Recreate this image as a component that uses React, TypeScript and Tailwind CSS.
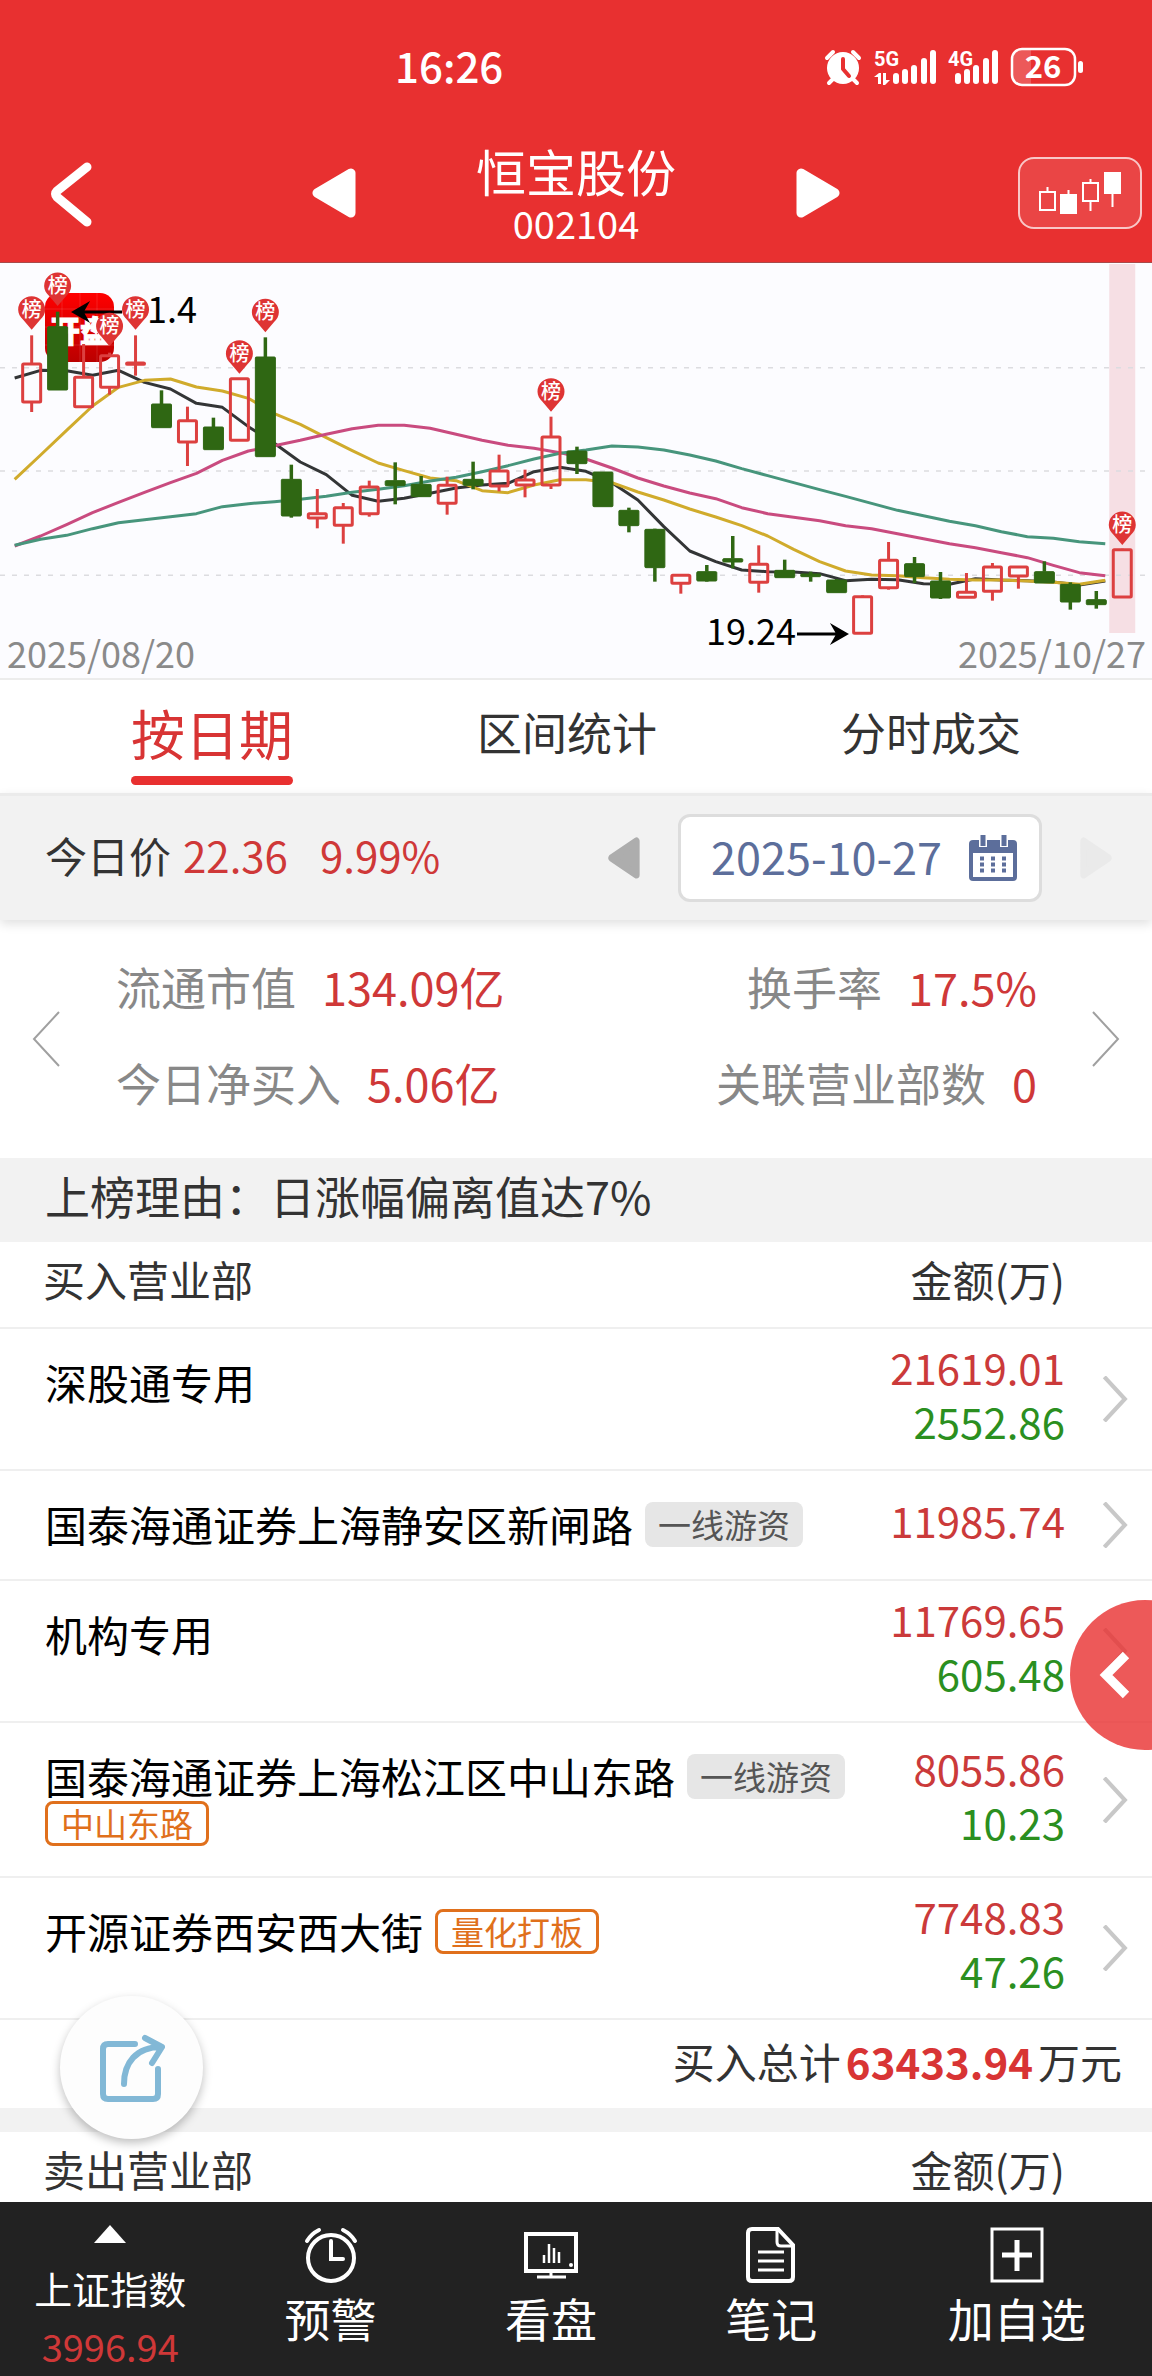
import { useState } from 'react';

type Candle = { up: boolean; high: number; top: number; bottom: number; low: number };

// [up, high, body top, body bottom, low] in thirds of a pixel from the top of the plot
const rawCandles: [number, number, number, number, number][] = [
  [1, 226, 312, 426, 456], [0, 155, 200, 390, 390], [1, 252, 352, 440, 440], [1, 278, 287, 382, 404],
  [1, 226, 309, 313, 347], [0, 391, 432, 503, 503], [1, 440, 482, 546, 618], [0, 473, 501, 569, 569],
  [1, 356, 356, 541, 541], [0, 232, 291, 590, 590], [0, 614, 658, 768, 773], [1, 687, 761, 774, 805],
  [1, 729, 743, 796, 851], [1, 662, 681, 761, 770], [0, 607, 662, 677, 733], [0, 648, 673, 710, 710],
  [1, 650, 676, 730, 764], [0, 605, 658, 676, 688], [1, 584, 633, 678, 694], [1, 629, 660, 675, 712],
  [1, 470, 531, 675, 687], [0, 560, 573, 611, 642], [0, 636, 636, 740, 740], [0, 743, 751, 797, 817],
  [0, 806, 808, 923, 965], [1, 943, 946, 970, 1001], [0, 915, 935, 963, 965], [0, 828, 896, 906, 925],
  [1, 856, 913, 967, 998], [0, 899, 931, 953, 953], [0, 935, 942, 950, 965], [0, 957, 960, 998, 998],
  [1, 1006, 1010, 1120, 1120], [1, 846, 901, 983, 989], [0, 891, 911, 950, 969], [0, 936, 963, 1014, 1017],
  [1, 939, 997, 1012, 1012], [1, 909, 921, 994, 1022], [1, 921, 921, 948, 986], [0, 904, 935, 969, 969],
  [0, 967, 973, 1026, 1049], [0, 993, 1019, 1034, 1046], [1, 866, 869, 1011, 1011],
];

const candles: Candle[] = rawCandles.map(([up, high, top, bottom, low]) => ({
  up: up === 1,
  high,
  top,
  bottom,
  low,
}));

// Moving averages, same scale as the candles
const averages = [
  {
    color: '#333536',
    values: [354, 331, 332, 346, 331, 367, 387, 430, 442, 500, 550, 606, 644, 706, 724, 715, 700, 684, 675, 670, 635, 622, 634, 668, 720, 800, 873, 905, 930, 935, 936, 941, 962, 958, 959, 971, 973, 956, 960, 962, 966, 975, 963],
  },
  {
    color: '#d0ab2c',
    values: [658, 585, 511, 438, 382, 361, 357, 381, 393, 415, 461, 493, 533, 572, 609, 632, 654, 662, 692, 698, 675, 659, 659, 668, 696, 720, 747, 771, 797, 828, 868, 905, 933, 945, 947, 953, 958, 960, 960, 963, 967, 973, 961],
  },
  {
    color: '#c94b7f',
    values: [858, 828, 794, 758, 727, 697, 668, 640, 601, 573, 557, 541, 523, 506, 496, 496, 505, 523, 541, 556, 565, 578, 597, 624, 654, 678, 699, 716, 743, 761, 772, 782, 797, 806, 821, 836, 851, 863, 878, 893, 916, 938, 947],
  },
  {
    color: '#47957c',
    values: [856, 838, 826, 806, 788, 779, 770, 761, 740, 731, 725, 718, 709, 697, 688, 677, 663, 652, 635, 617, 597, 580, 570, 558, 561, 570, 585, 603, 626, 647, 668, 689, 709, 730, 751, 767, 784, 797, 815, 830, 835, 845, 851],
  },
];

const pins = [[0, 149], [1, 78], [3, 199], [4, 149], [8, 281], [9, 157], [20, 395], [42, 795]];

const yOf = (v: number) => (v - 9) / 3;
const xOf = (i: number) => (95 + 77.9 * i) / 3;

type Seat = { name: string; tags?: { text: string; hot?: boolean }[]; buy: string; sell?: string };

const seats: Seat[] = [
  { name: '深股通专用', buy: '21619.01', sell: '2552.86' },
  { name: '国泰海通证券上海静安区新闸路', tags: [{ text: '一线游资' }], buy: '11985.74' },
  { name: '机构专用', buy: '11769.65', sell: '605.48' },
  {
    name: '国泰海通证券上海松江区中山东路',
    tags: [{ text: '一线游资' }, { text: '中山东路', hot: true }],
    buy: '8055.86',
    sell: '10.23',
  },
  { name: '开源证券西安西大街', tags: [{ text: '量化打板', hot: true }], buy: '7748.83', sell: '47.26' },
];

const tabs = ['按日期', '区间统计', '分时成交'];

function Bars() {
  return (
    <>
      <rect x="0" y="25" width="6" height="11" rx="3" />
      <rect x="9" y="21" width="6" height="15" rx="3" />
      <rect x="18" y="17" width="6" height="19" rx="3" />
      <rect x="28" y="10" width="6" height="26" rx="3" />
      <rect x="37" y="2" width="6" height="34" rx="3" />
    </>
  );
}

function StatusBar() {
  return (
    <div className="flex h-[138px] items-center justify-between pb-1 pl-[395px] pr-[68px]">
      <span className="pb-1 text-[42px] leading-none font-medium">16:26</span>
      <div className="flex items-center gap-3">
        <svg width="38" height="38" viewBox="0 0 38 38" aria-hidden="true">
          <path d="M3 10l6-6M35 10l-6-6M5 35l5-5M33 35l-5-5" stroke="white" strokeWidth="4" strokeLinecap="round" />
          <circle cx="19" cy="20" r="16" fill="white" />
          <path d="M19 11v10l6 7" stroke="#e83030" strokeWidth="4" fill="none" strokeLinecap="round" strokeLinejoin="round" />
        </svg>
        <svg width="62" height="38" viewBox="0 0 62 38" fill="white" aria-hidden="true">
          <text x="0" y="18" fontSize="20" fontWeight="700" fontFamily="Roboto, sans-serif">5G</text>
          <path d="M0 29l5-4h2v11H4v-7zM9 25h3v7h4l-5 5H9z" />
          <g transform="translate(19 0)">
            <Bars />
          </g>
        </svg>
        <svg width="50" height="38" viewBox="0 0 50 38" fill="white" aria-hidden="true">
          <text x="0" y="18" fontSize="20" fontWeight="700" fontFamily="Roboto, sans-serif">4G</text>
          <g transform="translate(7 0)">
            <Bars />
          </g>
        </svg>
        <svg width="74" height="48" viewBox="0 -4 74 48" aria-hidden="true">
          <path d="M12 3h9v34h-9a9 9 0 0 1-9-9V12a9 9 0 0 1 9-9z" fill="white" fillOpacity="0.2" />
          <rect x="2" y="2" width="63" height="36" rx="10" fill="none" stroke="white" strokeWidth="2.5" />
          <rect x="68" y="14" width="5" height="12" rx="2.5" fill="white" />
          <text x="33" y="31" fontSize="31" fontWeight="700" textAnchor="middle" fill="white">26</text>
        </svg>
      </div>
    </div>
  );
}

function Arrow({ flip, className, color }: { flip?: boolean; className: string; color: string }) {
  return (
    <svg className={className} viewBox="0 0 44 50" preserveAspectRatio="none" aria-hidden="true">
      <path
        d={flip ? 'M5 5v40l34-20z' : 'M39 5v40L5 25z'}
        fill={color}
        stroke={color}
        strokeWidth="9"
        strokeLinejoin="round"
      />
    </svg>
  );
}

function Chevron({ className, width, flip }: { className: string; width: number; flip?: boolean }) {
  return (
    <svg className={className} viewBox="0 0 28 56" fill="none" stroke="currentColor" strokeWidth={width} aria-hidden="true">
      <path d={flip ? 'M27 1L2 28l25 27' : 'M1 1l25 27L1 55'} />
    </svg>
  );
}

function PriceChart() {
  const last = candles.length - 1;
  return (
    <svg className="block w-full border-b-2 border-[#ececec] bg-[#fcfcff]" viewBox="0 0 1152 415" role="img" aria-label="日K线">
      <defs>
        <linearGradient id="logo" x1="0" y1="0" x2="0" y2="1">
          <stop offset="0" stopColor="#ff0000" />
          <stop offset="1" stopColor="#bb0000" />
        </linearGradient>
      </defs>
      <rect x={xOf(last) - 13} y="1" width="26" height="369" fill="#f6dfe4" />
      {[323, 633, 946].map((v) => (
        <line key={v} x1="0" x2="1146" y1={yOf(v)} y2={yOf(v)} stroke="#dcdce0" strokeWidth="1.5" strokeDasharray="5 7" />
      ))}

      {/* app badge behind the first candles */}
      <rect x="45" y="30" width="69" height="69" rx="14" fill="url(#logo)" />
      <path d="M45 46h69M45 64h69M45 82h69M62 30v69M80 30v69M97 30v69" stroke="#ffffff" strokeOpacity="0.12" />
      <text x="80" y="79" fontSize="30" fontWeight="900" textAnchor="middle" fill="white" stroke="white">开盘</text>

      {averages.map((line) => (
        <polyline
          key={line.color}
          points={line.values.map((v, i) => `${xOf(i) - 17},${yOf(v)}`).join(' ')}
          fill="none"
          stroke={line.color}
          strokeWidth="3"
          strokeLinejoin="round"
        />
      ))}

      {candles.map((c, i) => {
        const x = xOf(i);
        const color = c.up ? '#dc4040' : '#2f6713';
        const top = yOf(c.top);
        const bottom = yOf(c.bottom);
        return (
          <g key={i} stroke={color} strokeWidth={c.up ? 3 : 3.5}>
            {c.high < c.top && <line x1={x} x2={x} y1={yOf(c.high)} y2={top} />}
            {c.low > c.bottom && <line x1={x} x2={x} y1={bottom} y2={yOf(c.low)} />}
            {c.up ? (
              <rect x={x - 9} y={top} width="18" height={bottom - top} rx="1" fill="none" />
            ) : (
              <rect x={x - 10} y={top} width="20" height={bottom - top} rx="1" fill={color} strokeWidth="1" />
            )}
          </g>
        );
      })}

      <path d="M76 49h46M74 49l12-7-4 7 4 7z" stroke="black" strokeWidth="3" />
      <text x="147" y="60" fontSize="36">1.4</text>
      <text x="706" y="382" fontSize="36">19.24</text>
      <path d="M797 371h46M846 371l-12-7 4 7-4 7z" stroke="black" strokeWidth="3" />

      {pins.map(([i, v]) => (
        <g key={i} transform={`translate(${xOf(i)} ${yOf(v)})`}>
          <path d="M-13.500 0a13.500 13.500 0 1 1 27 0c0 4-2 7-5 10L0 20l-8.500-10c-3-3-5-6-5-10z" fill="#de3434" />
          <text y="7" fontSize="20" fontWeight="500" textAnchor="middle" fill="white">榜</text>
        </g>
      ))}

      <text x="7" y="405" fontSize="36" fill="#8a8a8a">2025/08/20</text>
      <text x="1146" y="405" fontSize="36" fill="#8a8a8a" textAnchor="end">2025/10/27</text>
    </svg>
  );
}

function Stat({ label, value }: { label: string; value: string }) {
  return (
    <div className="flex gap-[26px]">
      <dt className="text-[#888888]">{label}</dt>
      <dd className="text-[#cf3838]">{value}</dd>
    </div>
  );
}

function SeatHead({ title }: { title: string }) {
  return (
    <thead>
      <tr className="h-[86px] border-b-2 border-[#efefef] text-[#333333]">
        <th className="pb-3 pl-[43px] text-left font-normal">{title}</th>
        <th className="w-[210px] pb-3 text-right font-normal">金额(万)</th>
        <th className="w-[87px]" />
      </tr>
    </thead>
  );
}

function SeatRow({ seat }: { seat: Seat }) {
  return (
    <tr className="border-b-2 border-[#efefef]">
      <td className="pt-7 pb-[30px] pl-[45px] align-top">
        <div className="flex flex-wrap items-center gap-x-3">
          <span className="leading-[50px] text-black">{seat.name}</span>
          {seat.tags?.map((tag) =>
            tag.hot ? (
              <span key={tag.text} className="rounded-lg border-3 border-[#e0701c] px-[13px] text-[33px] leading-[39px] text-[#e0701c]">
                {tag.text}
              </span>
            ) : (
              <span key={tag.text} className="rounded-lg bg-[#e6e6e6] px-[13px] text-[33px] leading-[45px] text-[#555555]">
                {tag.text}
              </span>
            )
          )}
        </div>
      </td>
      <td className="pt-[11px] pb-[21px] text-right align-middle leading-[54px]">
        <div className="text-[#cb3a3a]">{seat.buy}</div>
        {seat.sell && <div className="text-[#2b8f1f]">{seat.sell}</div>}
      </td>
      <td className="align-middle">
        <button type="button" aria-label={seat.name} className="ml-[37px] block text-[#c8c8c8]">
          <Chevron className="h-[46px] w-[26px]" width={5} />
        </button>
      </td>
    </tr>
  );
}

function NavItem({ label, children }: { label: string; children: React.ReactNode }) {
  return (
    <button type="button" className="flex flex-[22] flex-col items-center pt-[25px] text-[46px] leading-[68px] last:flex-[27]">
      <svg width="54" height="56" viewBox="0 0 54 56" fill="none" stroke="white" strokeWidth="3" aria-hidden="true">
        {children}
      </svg>
      {label}
    </button>
  );
}

function App() {
  const [tab, setTab] = useState(0);
  const [date, setDate] = useState('2025-10-27');

  return (
    <div className="min-h-screen bg-white pb-[158px] font-['Noto_Sans_CJK_SC',sans-serif] text-[42px] text-[#333333]">
      <header className="h-[263px] border-b border-[#a84a4a] bg-[#e83030] text-white">
        <StatusBar />
        <div className="grid grid-cols-[1fr_528px_1fr] items-center">
          <button type="button" aria-label="返回" className="ml-[46px] justify-self-start">
            <svg width="50" height="72" viewBox="0 0 50 72" fill="none" aria-hidden="true">
              <path d="M41 10L11 34q-3 3 0 6l30 25" stroke="white" strokeWidth="9" strokeLinecap="round" strokeLinejoin="round" />
            </svg>
          </button>
          <div className="flex items-center justify-between">
            <button type="button" aria-label="上一只">
              <Arrow className="h-[50px] w-11" color="#ffffff" />
            </button>
            <div className="pb-1 text-center">
              <h1 className="text-[50px] leading-[64px] font-normal">恒宝股份</h1>
              <p className="text-[38px] leading-[42px]">002104</p>
            </div>
            <button type="button" aria-label="下一只">
              <Arrow flip className="h-[50px] w-11" color="#ffffff" />
            </button>
          </div>
          <button
            type="button"
            aria-label="K线"
            className="mr-[10px] flex h-[72px] w-[124px] items-center justify-center justify-self-end rounded-2xl border-2 border-white/70 bg-white/10"
          >
            <svg width="86" height="48" viewBox="0 0 86 48" fill="none" stroke="white" strokeWidth="2" aria-hidden="true">
              <path d="M3 23h15v18H3zM10.500 18v5M46 14h15v18H46zM53.500 10v4M53.500 32v10" />
              <path d="M24 26h15v18H24zM31.500 21v5M68 4h15v20H68zM75.500 24v14" fill="white" />
            </svg>
          </button>
        </div>
      </header>

      <PriceChart />

      <nav className="flex h-[113px] items-start justify-between px-[131px]">
        {tabs.map((name, i) => (
          <button
            key={name}
            type="button"
            onClick={() => setTab(i)}
            className={
              tab === i
                ? 'relative h-[105px] text-[54px] leading-[102px] text-[#d83434]'
                : 'text-[45px] leading-[104px] text-[#333333]'
            }
          >
            {name}
            {tab === i && <span className="absolute inset-x-0 bottom-0 h-[9px] rounded-full bg-[#e83030]" />}
          </button>
        ))}
      </nav>

      <section className="relative flex h-[127px] items-center border-t-3 border-[#ebebeb] bg-[#f2f2f2] pl-[45px] pr-10 shadow-[0_4px_10px_rgba(0,0,0,0.12)]">
        <p className="pb-2">
          今日价
          <span className="ml-3 text-[#cf3838]">22.36</span>
          <span className="ml-8 text-[#cf3838]">9.99%</span>
        </p>
        <button type="button" aria-label="前一天" className="ml-auto">
          <Arrow className="h-[42px] w-8" color="#adadad" />
        </button>
        <label className="mx-[38px] flex h-[88px] w-[364px] items-center rounded-xl border-3 border-[#dddddd] bg-white pl-[30px] pr-[22px]">
          <input
            aria-label="日期"
            value={date}
            onChange={(e) => setDate(e.target.value)}
            className="min-w-0 flex-1 pb-1 text-[45px] leading-[60px] text-[#5c6e9b] outline-none"
          />
          <svg width="48" height="46" viewBox="0 0 48 46" aria-hidden="true">
            <rect x="0" y="5" width="48" height="41" rx="4" fill="#5c6e9b" />
            <rect x="4" y="18" width="40" height="24" fill="white" />
            <path d="M14 0v12M35 0v12" stroke="white" strokeWidth="8" />
            <path d="M14 0v11M35 0v11" stroke="#5c6e9b" strokeWidth="5" />
            <path d="M11 23.500h28M11 29.500h28M11 35.500h28" stroke="#5c6e9b" strokeWidth="4" strokeDasharray="4 7" />
          </svg>
        </label>
        <button type="button" aria-label="后一天" disabled>
          <Arrow flip className="h-[42px] w-8" color="#eaeaea" />
        </button>
      </section>

      <section className="flex h-[238px] items-center justify-between px-8 text-[45px] leading-[96px]">
        <button type="button" aria-label="上一页" className="text-[#a0a0a0]">
          <Chevron flip className="h-14 w-7" width={2} />
        </button>
        <dl className="flex flex-1 justify-between pr-[55px] pb-2 pl-[56px]">
          <div>
            <Stat label="流通市值" value="134.09亿" />
            <Stat label="今日净买入" value="5.06亿" />
          </div>
          <div className="flex flex-col items-end">
            <Stat label="换手率" value="17.5%" />
            <Stat label="关联营业部数" value="0" />
          </div>
        </dl>
        <button type="button" aria-label="下一页" className="text-[#a0a0a0]">
          <Chevron className="h-14 w-7" width={2} />
        </button>
      </section>

      <p className="bg-[#f2f2f2] pb-2 pl-[45px] text-[45px] leading-[76px]">上榜理由：日涨幅偏离值达7%</p>

      <table className="w-full table-fixed border-collapse">
        <SeatHead title="买入营业部" />
        <tbody>
          {seats.map((seat) => (
            <SeatRow key={seat.name} seat={seat} />
          ))}
        </tbody>
      </table>

      <p className="flex justify-end gap-[5px] border-b-24 border-[#f2f2f2] pr-[30px] pb-[7px] leading-[81px]">
        买入总计<strong className="font-bold text-[#d83434]">63433.94</strong>万元
      </p>

      <table className="w-full table-fixed border-collapse">
        <SeatHead title="卖出营业部" />
      </table>

      {/* share */}
      <button
        type="button"
        aria-label="分享"
        className="fixed bottom-[237px] left-[60px] flex size-[143px] items-center justify-center rounded-full bg-[#fdfdfd] shadow-[0_4px_10px_rgba(0,0,0,0.25)]"
      >
        <svg width="66" height="70" viewBox="0 0 66 70" fill="none" stroke="#82b8d6" strokeWidth="6" strokeLinecap="round" strokeLinejoin="round" aria-hidden="true">
          <path d="M36 11H9q-5 0-5 5v45q0 5 5 5h45q5 0 5-5V36" />
          <path d="M25 51C25 30 37 14 62 14M46 5l17 9-10 16" />
        </svg>
      </button>

      {/* side drawer handle */}
      <div className="fixed right-0 bottom-[626px] h-[150px] w-[82px] overflow-hidden">
        <button type="button" aria-label="展开" className="flex h-[150px] w-[150px] items-center rounded-full bg-[#e83030]/80 pl-7">
          <svg width="32" height="48" viewBox="0 0 32 48" fill="none" stroke="white" strokeWidth="9" aria-hidden="true">
            <path d="M28 4L8 24l20 20" />
          </svg>
        </button>
      </div>

      <footer className="fixed inset-x-0 bottom-0 flex h-[174px] items-start bg-[#222222] text-white">
        <button type="button" className="flex flex-[22] flex-col items-center pt-[23px] text-[38px] leading-[58px]">
          <svg width="32" height="18" viewBox="0 0 32 18" fill="white" aria-hidden="true">
            <path d="M16 0l16 18H0z" />
          </svg>
          <span className="pt-4">上证指数</span>
          <span className="text-[#cf3838]">3996.94</span>
        </button>
        <NavItem label="预警">
          <circle cx="27" cy="31" r="23" strokeWidth="4" />
          <path d="M27 14v18h12M3 14q4-7 12-11M51 14q-4-7-12-11" strokeWidth="4" strokeLinecap="round" />
        </NavItem>
        <NavItem label="看盘">
          <path d="M2 7h50v37H2z" strokeWidth="4" />
          <path d="M27 44v5M13 50h29" />
          <path d="M20 28v8M25 17v19M30 21v15M35 25v11" strokeWidth="2.5" />
          <circle cx="47" cy="38" r="2" fill="white" stroke="none" />
        </NavItem>
        <NavItem label="笔记">
          <path d="M8 2h26l15 16v32q0 4-4 4H8q-4 0-4-4V6q0-4 4-4z" strokeWidth="4" />
          <path d="M33 3v12q0 4 4 4h11" />
          <path d="M14 25h26M14 34h26M14 43h26" />
        </NavItem>
        <NavItem label="加自选">
          <path d="M2 2h50v52H2z" />
          <path d="M27 13v31M12 28h30" strokeWidth="5" />
        </NavItem>
      </footer>
    </div>
  );
}

export default App;
